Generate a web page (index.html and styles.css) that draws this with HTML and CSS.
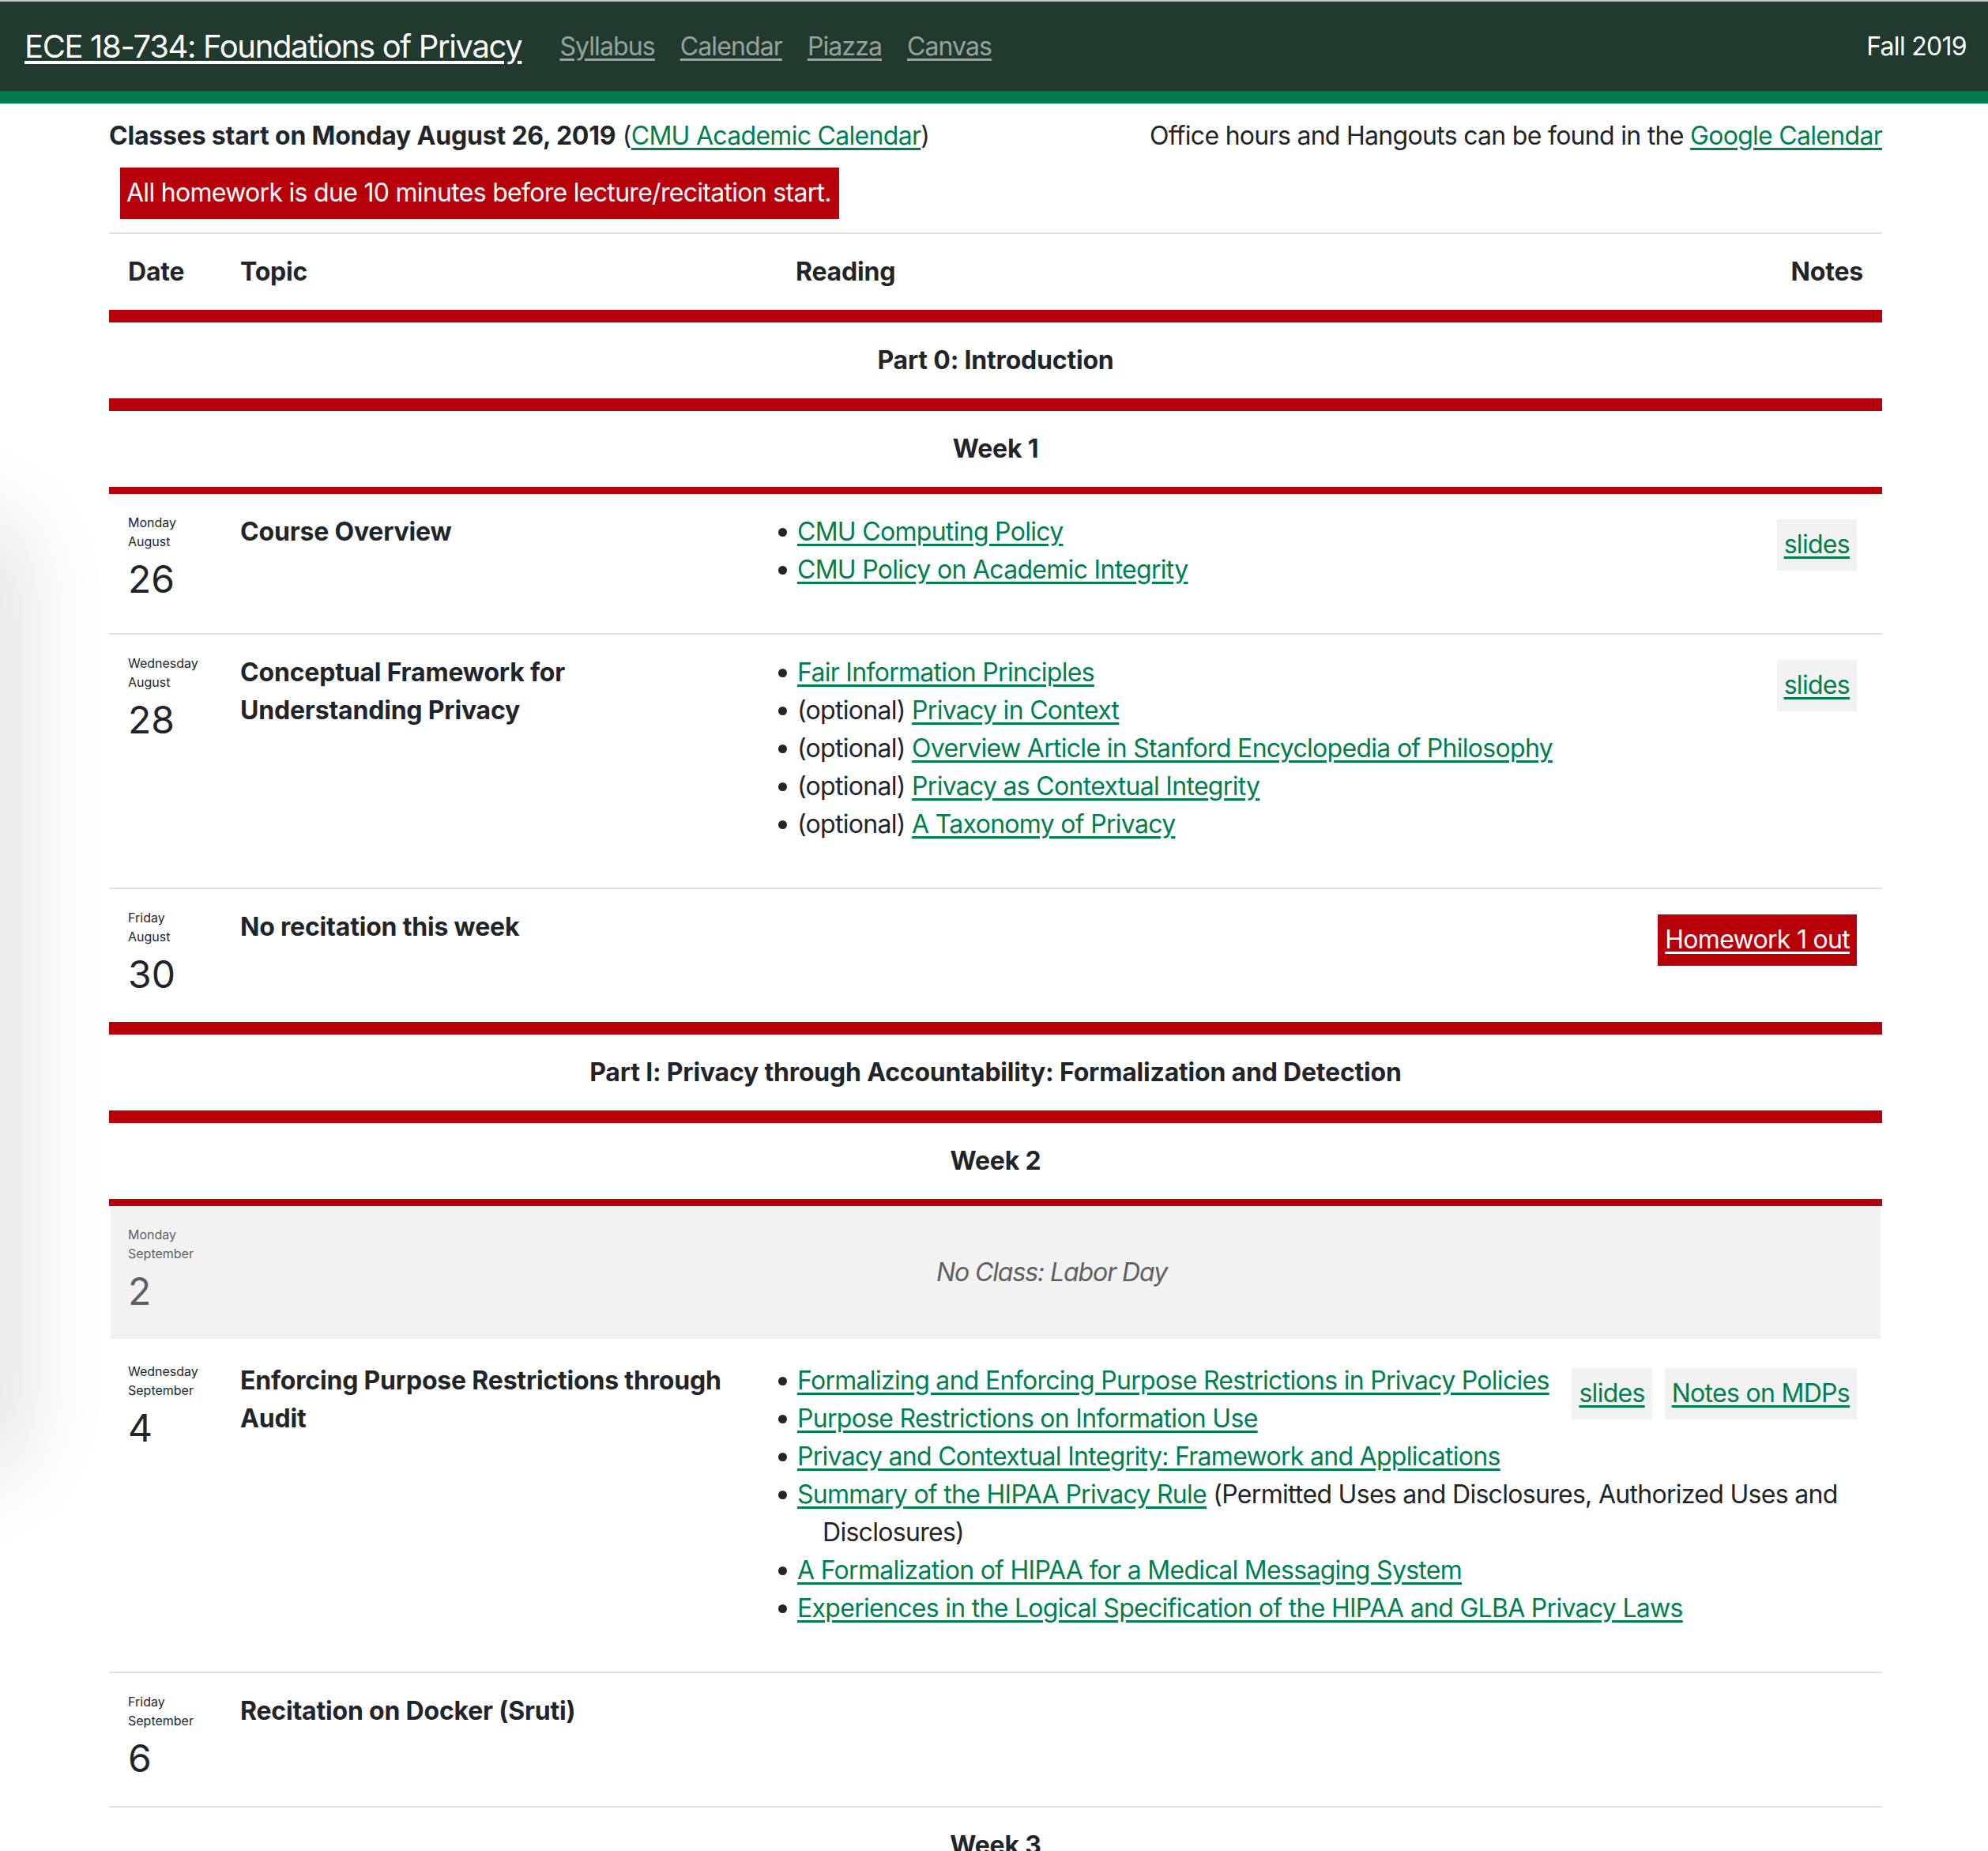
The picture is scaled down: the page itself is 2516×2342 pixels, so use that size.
FILE: index.html
```html
<!DOCTYPE html>
<html lang="en">
<head>
<meta charset="utf-8">
<title>ECE 18-734: Foundations of Privacy</title>
<link rel="stylesheet" href="styles.css">
</head>
<body>
<nav class="navbar">
  <a class="brand" href="#">ECE 18-734: Foundations of Privacy</a>
  <div class="nav-links">
    <a href="#">Syllabus</a>
    <a href="#">Calendar</a>
    <a href="#">Piazza</a>
    <a href="#">Canvas</a>
  </div>
  <span class="term">Fall 2019</span>
</nav>
<div class="stripe"></div>
<div class="shadow"></div>

<main class="container">
  <div class="info">
    <p><strong>Classes start on Monday August 26, 2019</strong> (<a href="#">CMU Academic Calendar</a>)</p>
    <p>Office hours and Hangouts can be found in the <a href="#">Google Calendar</a></p>
  </div>
  <div class="alert">All homework is due 10 minutes before lecture/recitation start.</div>

  <div class="schedule">
    <div class="thead">
      <div class="cell">Date</div>
      <div class="cell">Topic</div>
      <div class="cell">Reading</div>
      <div class="cell">Notes</div>
    </div>

    <div class="part">Part 0: Introduction</div>
    <div class="week">Week 1</div>

    <div class="row first">
      <div class="cell date"><div class="dow">Monday</div><div class="dow">August</div><div class="day">26</div></div>
      <div class="cell topic">Course Overview</div>
      <div class="cell reading">
        <div class="notes"><a class="btn" href="#">slides</a></div>
        <ul>
          <li><a href="#">CMU Computing Policy</a></li>
          <li><a href="#">CMU Policy on Academic Integrity</a></li>
        </ul>
      </div>
    </div>

    <div class="row">
      <div class="cell date"><div class="dow">Wednesday</div><div class="dow">August</div><div class="day">28</div></div>
      <div class="cell topic">Conceptual Framework for Understanding Privacy</div>
      <div class="cell reading">
        <div class="notes"><a class="btn" href="#">slides</a></div>
        <ul>
          <li><a href="#">Fair Information Principles</a></li>
          <li>(optional) <a href="#">Privacy in Context</a></li>
          <li>(optional) <a href="#">Overview Article in Stanford Encyclopedia of Philosophy</a></li>
          <li>(optional) <a href="#">Privacy as Contextual Integrity</a></li>
          <li>(optional) <a href="#">A Taxonomy of Privacy</a></li>
        </ul>
      </div>
    </div>

    <div class="row">
      <div class="cell date"><div class="dow">Friday</div><div class="dow">August</div><div class="day">30</div></div>
      <div class="cell topic">No recitation this week</div>
      <div class="cell reading">
        <div class="notes"><a class="btn btn-red" href="#">Homework 1 out</a></div>
      </div>
    </div>

    <div class="part part-top">Part I: Privacy through Accountability: Formalization and Detection</div>
    <div class="week">Week 2</div>

    <div class="row noclass">
      <div class="cell date"><div class="dow">Monday</div><div class="dow">September</div><div class="day">2</div></div>
      <div class="cell noclass-text">No Class: Labor Day</div>
    </div>

    <div class="row first">
      <div class="cell date"><div class="dow">Wednesday</div><div class="dow">September</div><div class="day">4</div></div>
      <div class="cell topic">Enforcing Purpose Restrictions through Audit</div>
      <div class="cell reading">
        <div class="notes"><a class="btn" href="#">slides</a><a class="btn" href="#">Notes on MDPs</a></div>
        <ul>
          <li><a href="#">Formalizing and Enforcing Purpose Restrictions in Privacy Policies</a></li>
          <li><a href="#">Purpose Restrictions on Information Use</a></li>
          <li><a href="#">Privacy and Contextual Integrity: Framework and Applications</a></li>
          <li><a href="#">Summary of the HIPAA Privacy Rule</a> (Permitted Uses and Disclosures, Authorized Uses and Disclosures)</li>
          <li><a href="#">A Formalization of HIPAA for a Medical Messaging System</a></li>
          <li><a href="#">Experiences in the Logical Specification of the HIPAA and GLBA Privacy Laws</a></li>
        </ul>
      </div>
    </div>

    <div class="row">
      <div class="cell date"><div class="dow">Friday</div><div class="dow">September</div><div class="day">6</div></div>
      <div class="cell topic">Recitation on Docker (Sruti)</div>
      <div class="cell reading"></div>
    </div>

    <div class="week week-top">Week 3</div>
  </div>
</main>
</body>
</html>
```

FILE: styles.css
```css
* { box-sizing: border-box; }

html, body {
  margin: 0;
  padding: 0;
  background: #fff;
}

body {
  font-family: Inter, "Noto Sans", "Liberation Sans", sans-serif;
  font-size: 32px;
  line-height: 48px;
  letter-spacing: -0.022em;
  color: #212529;
  position: relative;
  overflow: hidden;
}

a { color: #007f4e; text-decoration: underline; text-underline-offset: 4px; }

p { margin: 0; }

strong { letter-spacing: -0.006em; }

/* ---------- navbar ---------- */
.navbar {
  display: flex;
  align-items: center;
  height: 115px;
  border-top: 2px solid #c9c9c9;
  background: #203a2e;
  padding: 0 27px 0 31px;
}

.brand {
  color: #fff;
  font-size: 40px;
  line-height: 60px;
  letter-spacing: -0.034em;
  margin-right: 32px;
}

.nav-links {
  display: flex;
  flex: 1;
}

.nav-links a {
  color: rgba(255, 255, 255, 0.55);
  letter-spacing: -0.028em;
  padding: 0 16px;
}

.term {
  color: #fff;
}

.stripe {
  height: 16px;
  background: #007b4d;
}

.shadow {
  position: absolute;
  left: -80px;
  top: 680px;
  width: 80px;
  height: 1160px;
  border-radius: 40px;
  box-shadow: 0 0 110px 34px rgba(0, 0, 0, 0.11);
}

/* ---------- container ---------- */
.container {
  width: 2244px;
  margin: 0 134px 0 138px;
}

.info {
  display: flex;
  justify-content: space-between;
  margin-top: 17px;
}

.alert {
  display: inline-block;
  margin: 16px 0 17px 14px;
  padding: 8px 10px 9px 8px;
  background: #b8000a;
  color: #fff;
}

/* ---------- schedule ---------- */
.schedule {
  border-top: 2px solid #dee2e6;
}

.cell { padding: 24px; }

.thead {
  display: grid;
  grid-template-columns: 142px 703px 1fr auto;
  font-weight: 700;
  letter-spacing: -0.006em;
  border-bottom: 16px solid #b8000a;
}

.part {
  padding: 24px;
  text-align: center;
  font-weight: 700;
  letter-spacing: -0.006em;
  border-bottom: 16px solid #b8000a;
}

.part-top { border-top: 16px solid #b8000a; }

.week {
  padding: 24px;
  text-align: center;
  font-weight: 700;
  letter-spacing: -0.006em;
  border-bottom: 9px solid #b8000a;
}

.week-top { border-top: 2px solid #dee2e6; }

.row {
  display: grid;
  grid-template-columns: 142px 703px 1fr;
  border-top: 2px solid #dee2e6;
}

.row.first { border-top: 0; }

.date { letter-spacing: 0; }

.dow {
  font-size: 16px;
  line-height: 24px;
}

.day {
  font-size: 48px;
  line-height: 72px;
}

.topic {
  font-weight: 700;
  letter-spacing: -0.006em;
  padding-right: 60px;
}

.reading { display: flow-root; }

.reading ul {
  list-style: none;
  margin: 0 0 32px 2px;
  padding: 0;
}

.reading li {
  position: relative;
  padding-left: 32px;
  text-indent: -32px;
}

.reading li::before {
  content: "";
  position: absolute;
  left: -24px;
  top: 19px;
  width: 11px;
  height: 11px;
  border-radius: 50%;
  background: #212529;
}

.notes {
  float: right;
  display: flex;
  margin-left: 16px;
}

.btn {
  display: block;
  margin: 8px;
  padding: 8px 9px 9px;
  background: #f2f2f2;
}

.btn-red {
  background: #b8000a;
  color: #fff;
}

/* ---------- no class row ---------- */
.row.noclass {
  background: #f2f2f2;
  color: #5e6062;
  margin: 0 2px 5px;
  border-top: 0;
}

.noclass .date { padding-left: 22px; }

.noclass-text {
  grid-column: 2 / 4;
  display: flex;
  align-items: center;
  justify-content: center;
  font-style: italic;
  letter-spacing: -0.034em;
}
```
